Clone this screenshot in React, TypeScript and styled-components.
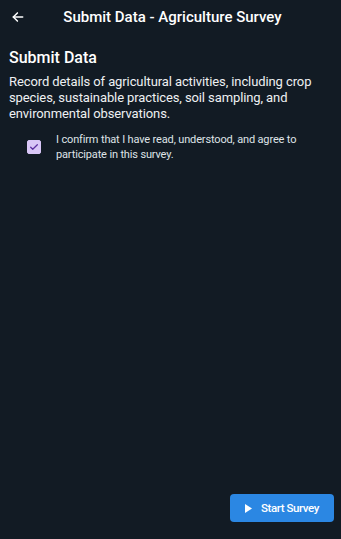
import styled, { createGlobalStyle } from "styled-components";

const GlobalStyle = createGlobalStyle`
  html, body {
    margin: 0;
    padding: 0;
    background: #121b24;
  }
  body {
    font-family: Roboto, "Noto Sans", sans-serif;
    color: #f1f3f5;
  }
`;

const Screen = styled.div`
  display: flex;
  flex-direction: column;
  width: 341px;
  height: 539px;
  background: #121b24;
  box-sizing: border-box;
`;

const Header = styled.header`
  display: flex;
  align-items: center;
  height: 34px;
  padding: 0 10px;
`;

const BackButton = styled.button`
  display: flex;
  align-items: center;
  justify-content: center;
  width: 16px;
  height: 16px;
  padding: 0;
  border: none;
  background: none;
  color: #ffffff;
  cursor: pointer;
`;

const Title = styled.h1`
  flex: 1;
  margin: 0;
  text-align: center;
  font-size: 15px;
  font-weight: 500;
  color: #ffffff;
  padding-right: 12px;
`;

const Content = styled.main`
  flex: 1;
  display: flex;
  flex-direction: column;
  padding: 14px 9px 0;
`;

const Heading = styled.h2`
  margin: 0 0 6px;
  font-size: 16px;
  font-weight: 500;
  line-height: 20px;
  color: #ffffff;
`;

const Description = styled.p`
  margin: 0;
  font-size: 13px;
  line-height: 16px;
  letter-spacing: -0.1px;
  color: #eef0f2;
`;

const ConsentRow = styled.label`
  display: flex;
  align-items: center;
  gap: 15px;
  margin-top: 10px;
  padding-left: 18px;
`;

const Box = styled.span<{ $checked: boolean }>`
  flex: none;
  display: flex;
  align-items: center;
  justify-content: center;
  width: 14px;
  height: 14px;
  border-radius: 2px;
  background: ${(p) => (p.$checked ? "#d8c6f6" : "transparent")};
  border: 1px solid #d8c6f6;
  box-sizing: border-box;
`;

const ConsentText = styled.span`
  max-width: 248px;
  font-size: 11px;
  line-height: 15px;
  color: #dfe3e7;
  letter-spacing: -0.15px;
`;

const Footer = styled.footer`
  display: flex;
  justify-content: flex-end;
  padding: 0 7px 17px 0;
`;

const StartButton = styled.button`
  display: flex;
  align-items: center;
  gap: 9px;
  height: 28px;
  padding: 0 15px 0 15px;
  border: none;
  border-radius: 4px;
  background: #2b87e3;
  color: #ffffff;
  font-family: Roboto, "Noto Sans", sans-serif;
  font-size: 11.5px;
  font-weight: 500;
  letter-spacing: -0.4px;
  cursor: pointer;
`;

export default function App() {
  return (
    <Screen>
      <GlobalStyle />
      <Header>
        <BackButton aria-label="Back">
          <svg width="14" height="14" viewBox="0 0 24 24" fill="none" stroke="currentColor" strokeWidth="2.6" strokeLinecap="round" strokeLinejoin="round">
            <path d="M20 12H4" />
            <path d="M11 5l-7 7 7 7" />
          </svg>
        </BackButton>
        <Title>Submit Data - Agriculture Survey</Title>
      </Header>
      <Content>
        <Heading>Submit Data</Heading>
        <Description>
          Record details of agricultural activities, including crop species,
          sustainable practices, soil sampling, and environmental observations.
        </Description>
        <ConsentRow>
          <Box $checked>
            <svg width="10" height="10" viewBox="0 0 24 24" fill="none" stroke="#5b2fa0" strokeWidth="3" strokeLinecap="round" strokeLinejoin="round">
              <path d="M4 12.5l5 5L20 6.5" />
            </svg>
          </Box>
          <ConsentText>
            I confirm that I have read, understood, and agree to participate in
            this survey.
          </ConsentText>
        </ConsentRow>
      </Content>
      <Footer>
        <StartButton>
          <svg width="7" height="9" viewBox="0 0 7 9">
            <path d="M0 0L7 4.5L0 9Z" fill="#ffffff" />
          </svg>
          Start Survey
        </StartButton>
      </Footer>
    </Screen>
  );
}
